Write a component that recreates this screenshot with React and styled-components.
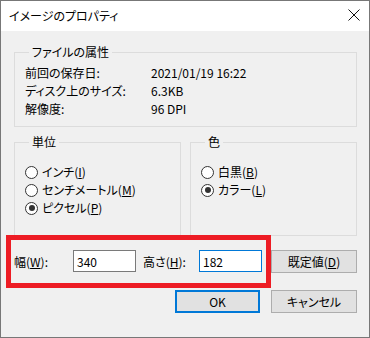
import React from 'react';
import styled, {createGlobalStyle} from 'styled-components';

const GlobalStyle = createGlobalStyle`
    html, body {
        margin: 0;
        padding: 0;
        background: #fff;
    }
    body {
        font-family: "Noto Sans CJK JP", "Noto Sans", sans-serif;
        font-size: 12px;
        color: #000;
        font-feature-settings: "palt";
    }
`;

const properties = [
    {label: '前回の保存日:', value: '2021/01/19 16:22'},
    {label: 'ディスク上のサイズ:', value: '6.3KB'},
    {label: '解像度:', value: '96 DPI'},
];

const Radio = ({checked = false, children}) => (
    <RadioRow>
        <RadioMark checked={checked} />
        <span>{children}</span>
    </RadioRow>
)

const CloseIcon = () => (
    <svg width="12" height="12" viewBox="0 0 12 12">
        <path d="M0.5 0.5 L11.5 11.5 M11.5 0.5 L0.5 11.5" stroke="#111" strokeWidth="1" fill="none" />
    </svg>
)

function App() {
    return (
        <>
            <GlobalStyle />
            <Window>
                <TitleBar>
                    <Title>イメージのプロパティ</Title>
                    <CloseBox><CloseIcon /></CloseBox>
                </TitleBar>
                <Body>
                    <GroupBox top={4} bottom={8}>
                        <Legend>ファイルの属性</Legend>
                        <PropGrid>
                            {properties.map(({label, value}) => (
                                <React.Fragment key={label}>
                                    <span>{label}</span>
                                    <span>{value}</span>
                                </React.Fragment>
                            ))}
                        </PropGrid>
                    </GroupBox>

                    <GroupRow>
                        <GroupBox top={13} bottom={18} width={167}>
                            <Legend>単位</Legend>
                            <Radio>インチ(<u>I</u>)</Radio>
                            <Radio>センチメートル(<u>M</u>)</Radio>
                            <Radio checked>ピクセル(<u>P</u>)</Radio>
                        </GroupBox>
                        <GroupBox top={13} bottom={18}>
                            <Legend>色</Legend>
                            <Radio>白黒(<u>B</u>)</Radio>
                            <Radio checked>カラー(<u>L</u>)</Radio>
                        </GroupBox>
                    </GroupRow>

                    <SizeRow>
                        <Highlight />
                        <FieldLabel width={59}>幅(<u>W</u>):</FieldLabel>
                        <TextBox defaultValue="340" />
                        <FieldLabel width={56} gap={7}>高さ(<u>H</u>):</FieldLabel>
                        <TextBox defaultValue="182" focused />
                        <Button width={86} gap={9}>既定値(<u>D</u>)</Button>
                    </SizeRow>

                    <ButtonRow>
                        <Button width={85} primary>OK</Button>
                        <Button width={86}>キャンセル</Button>
                    </ButtonRow>
                </Body>
            </Window>
        </>
    )
}

const Window = styled.div`
    box-sizing: border-box;
    width: 370px;
    height: 338px;
    border: 1px solid #777;
    background-color: #f0f0f0;
    display: flex;
    flex-direction: column;
`;

const TitleBar = styled.div`
    height: 30px;
    flex: 0 0 30px;
    background-color: #fff;
    display: flex;
    align-items: center;
    justify-content: space-between;
    padding: 0 9px 0 8px;
`;

const Title = styled.div`
    font-size: 12px;
    line-height: 16px;
    margin-top: -1px;
`;

const CloseBox = styled.div`
    display: flex;
    align-items: center;
    margin-top: -3px;
`;

const Body = styled.div`
    position: relative;
    display: flex;
    flex-direction: column;
    padding: 13px 12px 0 13px;
`;

const GroupBox = styled.fieldset`
    margin: 0;
    min-width: 0;
    box-sizing: border-box;
    border: 1px solid #dcdcdc;
    padding: ${({top}) => top}px 8px ${({bottom}) => bottom}px 10px;
    ${({width}) => width ? `flex: 0 0 ${width}px;` : 'flex: 1;'}
`;

const Legend = styled.legend`
    padding: 0 3px;
    margin-left: 4px;
    font-size: 12px;
    line-height: 16px;
`;

const PropGrid = styled.div`
    display: grid;
    grid-template-columns: 126px 1fr;
    line-height: 18px;
`;

const GroupRow = styled.div`
    display: flex;
    gap: 9px;
    margin-top: 7px;
`;

const RadioRow = styled.div`
    display: flex;
    align-items: center;
    gap: 4px;
    height: 18px;
    line-height: 18px;
    white-space: nowrap;
`;

const RadioMark = styled.span`
    position: relative;
    box-sizing: border-box;
    width: 13px;
    height: 13px;
    border-radius: 50%;
    border: 1px solid #333;
    background-color: #fff;
    flex: 0 0 13px;

    &::after {
        content: '';
        display: ${({checked}) => checked ? 'block' : 'none'};
        position: absolute;
        left: 2.5px;
        top: 2.5px;
        width: 6px;
        height: 6px;
        border-radius: 50%;
        background-color: #333;
    }
`;

const SizeRow = styled.div`
    position: relative;
    display: flex;
    align-items: center;
    margin-top: 14px;
    height: 23px;
`;

const Highlight = styled.div`
    position: absolute;
    left: -8px;
    top: -15px;
    width: 265px;
    height: 53px;
    box-sizing: border-box;
    border: 5px solid #ed1c24;
    pointer-events: none;
`;

const FieldLabel = styled.span`
    width: ${({width}) => width}px;
    margin-left: ${({gap = 0}) => gap}px;
    white-space: nowrap;
    line-height: 18px;
`;

const TextBox = styled.input`
    box-sizing: border-box;
    width: 63px;
    height: 22px;
    margin: 0 0 1px;
    padding: 0 3px;
    border: 1px solid ${({focused}) => focused ? '#0078d7' : '#7a7a7a'};
    background-color: #fff;
    font-family: inherit;
    font-size: 12px;
    font-feature-settings: "palt";
    color: #000;
    outline: none;
`;

const Button = styled.div`
    box-sizing: border-box;
    width: ${({width}) => width}px;
    height: 23px;
    margin-left: ${({gap = 0}) => gap}px;
    display: flex;
    align-items: center;
    justify-content: center;
    background-color: #e1e1e1;
    border: ${({primary}) => primary ? '2px solid #0078d7' : '1px solid #adadad'};
    line-height: 16px;
`;

const ButtonRow = styled.div`
    display: flex;
    justify-content: flex-end;
    gap: 11px;
    margin-top: 17px;
`;

export default App;
